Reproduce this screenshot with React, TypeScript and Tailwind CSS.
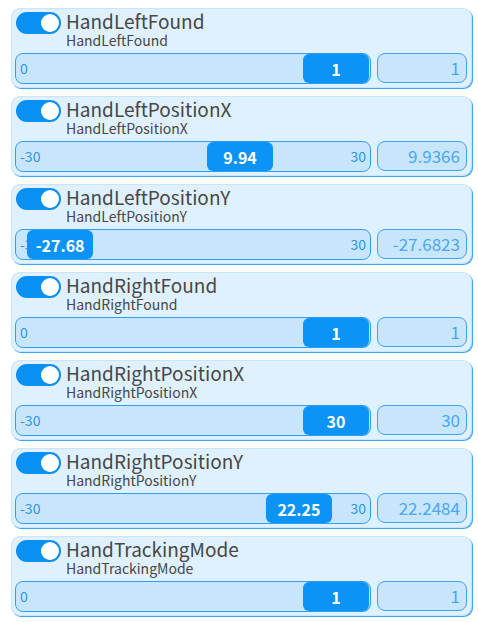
import { useState } from "react";

type Param = {
  name: string;
  min: number;
  max: number;
  value: number;
  shown: string;
  raw: string;
};

const params: Param[] = [
  { name: "HandLeftFound", min: 0, max: 1, value: 1, shown: "1", raw: "1" },
  { name: "HandLeftPositionX", min: -30, max: 30, value: 9.9366, shown: "9.94", raw: "9.9366" },
  { name: "HandLeftPositionY", min: -30, max: 30, value: -27.6823, shown: "-27.68", raw: "-27.6823" },
  { name: "HandRightFound", min: 0, max: 1, value: 1, shown: "1", raw: "1" },
  { name: "HandRightPositionX", min: -30, max: 30, value: 30, shown: "30", raw: "30" },
  { name: "HandRightPositionY", min: -30, max: 30, value: 22.2484, shown: "22.25", raw: "22.2484" },
  { name: "HandTrackingMode", min: 0, max: 1, value: 1, shown: "1", raw: "1" },
];

const Toggle = ({ on }: { on: boolean }) => (
  <div
    className={`w-[45px] h-[22px] rounded-full flex items-center px-[2px] shrink-0 ${
      on ? "bg-[#0a8ff2] justify-end" : "bg-gray-300 justify-start"
    }`}
  >
    <div className="w-[18px] h-[18px] rounded-full bg-white" />
  </div>
);

const ParamCard = ({ p }: { p: Param }) => {
  const [on, setOn] = useState(true);
  const frac = (p.value - p.min) / (p.max - p.min);
  // track inner width minus thumb width
  const left = frac * (356 - 3 - 66);

  return (
    <div className="h-[80px] rounded-[9px] bg-[#dff1fe] border border-[#c8e5fb] shadow-[1px_1px_0_0_#3ba6f6] px-[3px] pt-[3px] flex flex-col">
      <div className="flex items-start gap-[5px] pl-[1px] h-[41px]">
        <button onClick={() => setOn(!on)}>
          <Toggle on={on} />
        </button>
        <div className="flex flex-col -mt-[2px]">
          <span className="text-[19px] leading-[22px] text-[#474747]">{p.name}</span>
          <span className="text-[14px] leading-[16px] text-[#474747]">{p.name}</span>
        </div>
      </div>
      <div className="flex gap-[6px]">
        <div className="relative w-[356px] h-[31px] rounded-[8px] border-[1.5px] border-[#2f9ff5] bg-[#c7e6fc] flex items-center justify-between px-[4px] text-[14px] text-[#2f95e8]">
          <span>{p.min}</span>
          <span>{p.max}</span>
          <div
            className="absolute top-0 bottom-0 w-[66px] rounded-[6px] bg-[#0b94f6] flex items-center justify-center text-white font-bold text-[16px]"
            style={{ left }}
          >
            {p.shown}
          </div>
        </div>
        <div className="w-[90px] h-[30px] rounded-[8px] border-[1.5px] border-[#3aa6f6] bg-[#c7e6fc] flex items-center justify-end pr-[6px] text-[17px] text-[#4aa7f1]">
          {p.raw}
        </div>
      </div>
    </div>
  );
};

export default function App() {
  return (
    <div
      className="min-h-screen bg-white pt-[8px] pl-[11px] pr-[6px] flex flex-col gap-[8px]"
      style={{ fontFamily: '"Noto Sans CJK JP", "Noto Sans", sans-serif' }}
    >
      {params.map((p) => (
        <ParamCard key={p.name} p={p} />
      ))}
    </div>
  );
}
